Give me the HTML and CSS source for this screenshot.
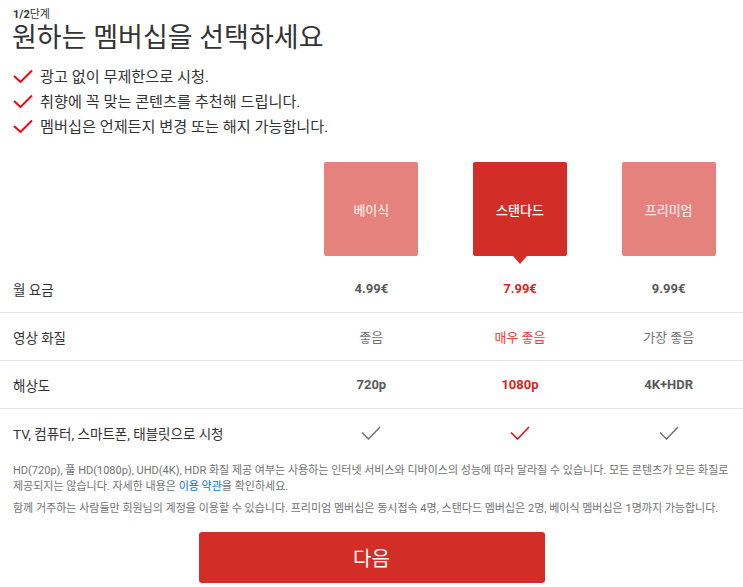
FILE: index.html
```html
<!DOCTYPE html>
<html lang="ko">
<head>
<meta charset="utf-8">
<link rel="stylesheet" href="styles.css">
</head>
<body>
<div class="page">
  <div class="step"><b>1/2</b>단계</div>
  <h1 class="title">원하는 멤버십을 선택하세요</h1>
  <ul class="benefits">
    <li><svg class="bcheck" viewBox="0 0 20 14"><polyline points="1,7 7.5,13 19,1.5"/></svg>광고 없이 무제한으로 시청.</li>
    <li><svg class="bcheck" viewBox="0 0 20 14"><polyline points="1,7 7.5,13 19,1.5"/></svg>취향에 꼭 맞는 콘텐츠를 추천해 드립니다.</li>
    <li><svg class="bcheck" viewBox="0 0 20 14"><polyline points="1,7 7.5,13 19,1.5"/></svg>멤버십은 언제든지 변경 또는 해지 가능합니다.</li>
  </ul>

  <div class="plans">
    <div class="spacer"></div>
    <div class="plancell"><div class="planbox">베이식</div></div>
    <div class="plancell"><div class="planbox selected">스탠다드</div></div>
    <div class="plancell"><div class="planbox">프리미엄</div></div>
  </div>

  <div class="table">
    <div class="row">
      <div class="label">월 요금</div>
      <div class="val bold">4.99€</div>
      <div class="val bold red">7.99€</div>
      <div class="val bold">9.99€</div>
    </div>
    <div class="row">
      <div class="label">영상 화질</div>
      <div class="val">좋음</div>
      <div class="val red">매우 좋음</div>
      <div class="val">가장 좋음</div>
    </div>
    <div class="row">
      <div class="label">해상도</div>
      <div class="val bold">720p</div>
      <div class="val bold red">1080p</div>
      <div class="val bold">4K+HDR</div>
    </div>
    <div class="row last">
      <div class="label">TV, 컴퓨터, 스마트폰, 태블릿으로 시청</div>
      <div class="val"><svg class="tcheck" viewBox="0 0 20 14"><polyline points="1,6.5 7.5,13 19,1"/></svg></div>
      <div class="val"><svg class="tcheck red" viewBox="0 0 20 14"><polyline points="1,6.5 7.5,13 19,1"/></svg></div>
      <div class="val"><svg class="tcheck" viewBox="0 0 20 14"><polyline points="1,6.5 7.5,13 19,1"/></svg></div>
    </div>
  </div>

  <p class="note">HD(720p), 풀 HD(1080p), UHD(4K), HDR 화질 제공 여부는 사용하는 인터넷 서비스와 디바이스의 성능에 따라 달라질 수 있습니다. 모든 콘텐츠가 모든 화질로 제공되지는 않습니다. 자세한 내용은 <a class="terms" href="#">이용 약관</a>을 확인하세요.</p>
  <p class="note second">함께 거주하는 사람들만 회원님의 계정을 이용할 수 있습니다. 프리미엄 멤버십은 동시접속 4명, 스탠다드 멤버십은 2명, 베이식 멤버십은 1명까지 가능합니다.</p>

  <div class="actions"><button class="next">다음</button></div>
</div>
</body>
</html>
```
FILE: styles.css
```css
* { box-sizing: border-box; }
html, body { margin: 0; padding: 0; background: #fff; }
body {
  font-family: Roboto, "Noto Sans CJK KR", sans-serif;
  color: #333;
  width: 743px;
  overflow: hidden;
}
.page { padding-top: 7px; }
.step {
  font-size: 11px;
  line-height: 16px;
  color: #333;
  padding-left: 13px;
}
.step b { font-weight: 700; }
.title {
  margin: 0;
  padding-left: 12px;
  font-size: 27px;
  font-weight: 400;
  line-height: 30px;
  color: #333;
}
.benefits {
  list-style: none;
  margin: 9px 0 0;
  padding: 0 0 0 13px;
}
.benefits li {
  display: flex;
  align-items: center;
  height: 25px;
  font-size: 15.2px;
  color: #333;
}
.bcheck {
  width: 20px;
  height: 14px;
  margin-right: 7px;
  margin-top: 2px;
  fill: none;
  stroke: #e50914;
  stroke-width: 2;
}
.plans {
  display: grid;
  grid-template-columns: 297px repeat(3, 1fr);
  margin-top: 25px;
}
.plancell { display: flex; justify-content: center; }
.planbox {
  position: relative;
  width: 94px;
  height: 94px;
  border-radius: 2px;
  background: #e5827d;
  color: #fbe6e4;
  display: flex;
  align-items: center;
  justify-content: center;
  font-size: 13px;
  font-weight: 500;
}
.planbox.selected { background: #d22e27; color: #fff; }
.planbox.selected::after {
  content: "";
  position: absolute;
  left: 50%;
  bottom: -8px;
  margin-left: -7px;
  border-left: 7px solid transparent;
  border-right: 7px solid transparent;
  border-top: 8px solid #d22e27;
}
.table { margin-top: 9px; }
.row {
  display: grid;
  grid-template-columns: 297px repeat(3, 1fr);
  align-items: center;
  height: 48px;
  border-bottom: 1px solid #e2e2e2;
}
.row.last { border-bottom: none; height: 47px; }
.label {
  padding-left: 13px;
  font-size: 13.5px;
  color: #333;
}
.val {
  text-align: center;
  font-size: 13px;
  color: #737373;
  display: flex;
  justify-content: center;
  align-items: center;
}
.val.bold { font-weight: 700; color: #595959; }
.val.red { color: #e5413a; }
.val.bold.red { color: #d8251d; }
.tcheck {
  width: 20px;
  height: 14px;
  fill: none;
  stroke: #737373;
  stroke-width: 1.5;
}
.tcheck.red { stroke: #e50914; }
.note {
  margin: 7px 0 0;
  padding: 0 6px 0 13px;
  font-size: 11px;
  line-height: 16px;
  color: #737373;
}
.terms {
  color: #0071eb;
  text-decoration: none;
}
.note.second { margin-top: 6px; }
.actions {
  display: flex;
  justify-content: center;
  margin-top: 15px;
}
.next {
  width: 346px;
  height: 51px;
  border: none;
  border-radius: 3px;
  background: #d22e27;
  color: #fff;
  font-family: Roboto, "Noto Sans CJK KR", sans-serif;
  font-size: 20px;
  cursor: pointer;
}
```
